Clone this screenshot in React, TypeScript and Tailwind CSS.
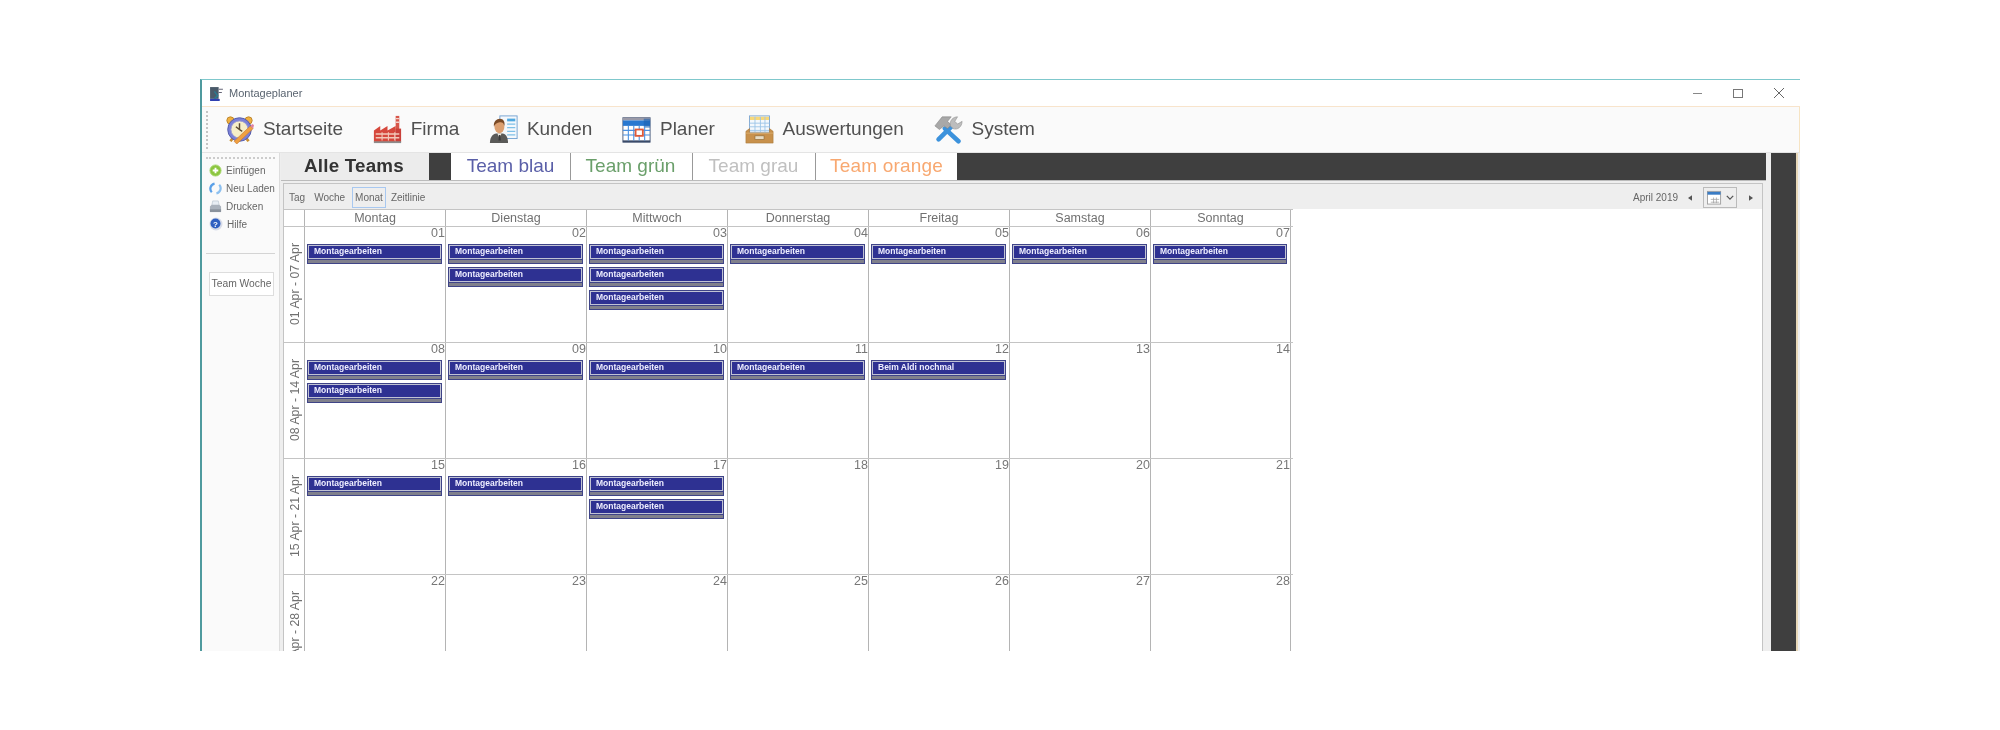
import React from "react";

const ClockIcon = () => (
  <svg viewBox="0 0 32 32" className="w-[29px] h-[29px] shrink-0">
    <circle cx="6" cy="6" r="4" fill="#f0b040" stroke="#b9822a" />
    <circle cx="26" cy="6" r="4" fill="#f0b040" stroke="#b9822a" />
    <path d="M6 29l3-4M26 29l-3-4" stroke="#c98f30" strokeWidth="3" />
    <circle cx="16" cy="16" r="13" fill="#7a80d8" stroke="#5058a8" />
    <circle cx="16" cy="16" r="9.5" fill="#f6eec8" stroke="#9a9ad0" />
    <path d="M16 9v7l-4-3M16 16l3 2" stroke="#5a4a30" strokeWidth="1.6" fill="none" />
    <path d="M10 29L28 12l3 3-18 17z" fill="#f0a040" stroke="#c87830" strokeWidth=".7" />
    <path d="M28 12l3 3 1-4-2-1z" fill="#e080a0" />
  </svg>
);

const FactoryIcon = () => (
  <svg viewBox="0 0 32 32" className="w-[29px] h-[29px] shrink-0">
    <rect x="25" y="1" width="4" height="18" fill="#d8564a" />
    <path d="M25 4h4M25 8h4" stroke="#f0d0c8" strokeWidth="1.4" />
    <path d="M1 30V17l7-5v5l8-5v5l9-5v18z" fill="#d6483c" />
    <rect x="25" y="15" width="6" height="15" fill="#c9403a" />
    <path d="M3 21h26M3 25h26" stroke="#f2c8b8" strokeWidth="1.6" />
    <path d="M10 19v9M17 19v9M24 19v9" stroke="#f2c8b8" strokeWidth="1.2" />
    <rect x="1" y="29" width="30" height="2" fill="#8c8c8c" />
  </svg>
);

const PersonIcon = () => (
  <svg viewBox="0 0 32 32" className="w-[29px] h-[29px] shrink-0">
    <rect x="12" y="1" width="19" height="25" fill="#f4f8fc" stroke="#6f9fd0" />
    <rect x="20" y="4" width="9" height="3" fill="#4fa8e0" />
    <path d="M20 10h9M20 14h9M20 18h9M20 22h9" stroke="#7fc0e8" strokeWidth="1.5" />
    <path d="M1 31c0-8 4-11 9-11h3c5 0 8 3 8 11z" fill="#5a5a58" />
    <path d="M9 20l2.500 5 2.500-5z" fill="#efeae0" />
    <path d="M11 22h1.500l.5 6h-2.500z" fill="#3a3a3a" />
    <ellipse cx="11.500" cy="13" rx="5.500" ry="7" fill="#dca071" />
    <path d="M5.500 13c-1-6 3-9 6.500-9s6 3 5 8c-1-3-2-4-4-4-3 0-6 1-7.500 5z" fill="#7a4a26" />
  </svg>
);

const CalendarIcon = () => (
  <svg viewBox="0 0 32 32" className="w-[29px] h-[29px] shrink-0">
    <rect x="1" y="3" width="30" height="27" fill="#fff" stroke="#4a5a78" />
    <rect x="1" y="3" width="30" height="3" fill="#9a9aa8" />
    <path d="M1 6h30v6H1z" fill="#2878d0" />
    <path d="M24 4h7v10h-7z" fill="#1c60b0" opacity=".6" />
    <path d="M1 28h30v2H1z" fill="#3a4a68" />
    <path d="M7 12v16M13 12v16M19 12v16M25 12v16M1 17h30M1 22h30" stroke="#4a90e0" strokeWidth="1.2" />
    <rect x="15" y="16" width="8" height="7" fill="#fff" stroke="#e05a38" strokeWidth="2" />
  </svg>
);

const TrayIcon = () => (
  <svg viewBox="0 0 32 32" className="w-[29px] h-[29px] shrink-0">
    <rect x="5" y="1" width="22" height="18" fill="#f4f8fc" stroke="#7aa4d0" />
    <rect x="5.500" y="2" width="21" height="3.500" fill="#f8d878" />
    <path d="M5 9h22M5 13h22M5 17h22M11 2v17M17 2v17M22 2v17" stroke="#9cc4e8" strokeWidth="1" />
    <path d="M1 18l4-3v5h22v-5l4 3v13H1z" fill="#c8914c" stroke="#a87638" strokeWidth=".6" />
    <path d="M1 20h30" stroke="#dcae70" />
    <rect x="11" y="23" width="10" height="4" fill="#e8dcc4" stroke="#8c6834" strokeWidth=".7" />
  </svg>
);

const ToolsIcon = () => (
  <svg viewBox="0 0 32 32" className="w-[29px] h-[29px] shrink-0">
    <path d="M12 15L27 29" stroke="#3c92dc" strokeWidth="5" strokeLinecap="round" />
    <path d="M5 27L20 12" stroke="#3c92dc" strokeWidth="5" strokeLinecap="round" />
    <path d="M1 12L9 2h10l-4 5 4 4-4 4-4-3-5 4z" fill="#a8a8a8" stroke="#808080" strokeWidth=".6" />
    <path d="M18 12c-1-6 3-10 8-10l-3 5 3 3 5-3c0 6-5 10-10 8z" fill="#bdbdbd" stroke="#8c8c8c" strokeWidth=".6" />
  </svg>
);

const ribbon: [React.ReactNode, string][] = [
  [<ClockIcon />, "Startseite"],
  [<FactoryIcon />, "Firma"],
  [<PersonIcon />, "Kunden"],
  [<CalendarIcon />, "Planer"],
  [<TrayIcon />, "Auswertungen"],
  [<ToolsIcon />, "System"],
];

const PlusIcon = () => (
  <svg viewBox="0 0 14 14" className="w-[13px] h-[13px] shrink-0">
    <circle cx="7" cy="7" r="6" fill="#8cc63f" stroke="#a8d870" />
    <path d="M7 4v6M4 7h6" stroke="#fff" strokeWidth="2" />
  </svg>
);
const ReloadIcon = () => (
  <svg viewBox="0 0 14 14" className="w-[13px] h-[13px] shrink-0">
    <path d="M3 11A5.500 5.500 0 0 1 6 1.800" fill="none" stroke="#5aa0e8" strokeWidth="2.400" />
    <path d="M11 3a5.500 5.500 0 0 1-3 9.200" fill="none" stroke="#8cc0f0" strokeWidth="2.400" />
  </svg>
);
const PrintIcon = () => (
  <svg viewBox="0 0 14 14" className="w-[13px] h-[13px] shrink-0">
    <path d="M4 1h6l1 5H3z" fill="#e8eef4" stroke="#b0bcc8" strokeWidth=".6" />
    <path d="M1 7l2-2h8l2 2v5H1z" fill="#aab2bc" />
    <path d="M1 10h12v3H1z" fill="#8a929c" />
  </svg>
);
const HelpIcon = () => (
  <svg viewBox="0 0 14 14" className="w-[14px] h-[14px] shrink-0">
    <circle cx="7" cy="7" r="6.500" fill="#d8dce8" />
    <circle cx="6.500" cy="6.500" r="5" fill="#2f5fc0" />
    <text x="6.500" y="9.500" textAnchor="middle" fontSize="8" fontWeight="700" fill="#fff" fontFamily="Liberation Sans">?</text>
  </svg>
);

const CalIcon = () => (
  <svg viewBox="0 0 16 16" className="w-[15px] h-[15px] shrink-0">
    <rect x=".5" y="1.500" width="14" height="13.500" fill="#fff" stroke="#a0a0a0" />
    <rect x=".5" y="2" width="14" height="3" fill="#3a7cc4" />
    <path d="M4 10h9M4 13h9M7 8v6M10 8v6" stroke="#a0a0a0" strokeWidth=".8" />
  </svg>
);

const days = ["Montag", "Dienstag", "Mittwoch", "Donnerstag", "Freitag", "Samstag", "Sonntag"];
const M = "Montagearbeiten";
const weeks: { label: string; days: { n: string; ev: string[] }[] }[] = [
  {
    label: "01 Apr - 07 Apr",
    days: [
      { n: "01", ev: [M] },
      { n: "02", ev: [M, M] },
      { n: "03", ev: [M, M, M] },
      { n: "04", ev: [M] },
      { n: "05", ev: [M] },
      { n: "06", ev: [M] },
      { n: "07", ev: [M] },
    ],
  },
  {
    label: "08 Apr - 14 Apr",
    days: [
      { n: "08", ev: [M, M] },
      { n: "09", ev: [M] },
      { n: "10", ev: [M] },
      { n: "11", ev: [M] },
      { n: "12", ev: ["Beim Aldi nochmal"] },
      { n: "13", ev: [] },
      { n: "14", ev: [] },
    ],
  },
  {
    label: "15 Apr - 21 Apr",
    days: [
      { n: "15", ev: [M] },
      { n: "16", ev: [M] },
      { n: "17", ev: [M, M] },
      { n: "18", ev: [] },
      { n: "19", ev: [] },
      { n: "20", ev: [] },
      { n: "21", ev: [] },
    ],
  },
  {
    label: "22 Apr - 28 Apr",
    days: ["22", "23", "24", "25", "26", "27", "28"].map((n) => ({ n, ev: [] })),
  },
];

const Event = ({ t }: { t: string }) => (
  <div className="h-[20px] bg-[#3f4488] p-[1px] mb-[3px]">
    <div className="h-[14px] bg-[#2e3192] border border-[#c0c2d4] pl-[5px] text-[8.5px] leading-[11px] font-bold text-[#eeeeff] overflow-hidden whitespace-nowrap">
      {t}
    </div>
    <div className="h-[3px] mt-[1px] bg-[#80808c]" />
  </div>
);

const Tab = ({ t, c, w, b }: { t: string; c: string; w: string; b: string }) => (
  <div className={`h-[27px] bg-white flex items-center justify-center text-[19px] shrink-0 ${c} ${w} ${b}`}>{t}</div>
);

export default function App() {
  return (
    <div className="h-[730px] w-[2000px] bg-white pt-[79px] pl-[200px] overflow-hidden font-['Liberation_Sans',sans-serif]">
      <div className="w-[1600px] h-[572px] flex flex-col border-t border-t-[#7fc8cc] border-l-2 border-l-[#4f9a9e] overflow-hidden bg-white blur-[0.5px]">
        {/* title bar */}
        <div className="h-[27px] shrink-0 flex items-center pl-[7px] pr-[16px] text-[#555] border-b border-b-[#f8e4cc]">
          <svg viewBox="0 0 14 14" className="w-[15px] h-[15px] shrink-0">
            <rect x="1" y="1" width="8" height="11" fill="#4a5a6a" />
            <path d="M9 3h4M9 6h3" stroke="#667" strokeWidth="1" />
            <path d="M5 5l3 4-3 3" stroke="#2a7a90" strokeWidth="1.400" fill="none" />
            <rect x="1" y="12" width="9" height="2" fill="#3040b0" />
          </svg>
          <span className="ml-[5px] text-[11px] text-[#5a6470]">Montageplaner</span>
          <div className="ml-auto flex items-center gap-[31px] text-[#777]">
            <span className="block w-[9px] h-px bg-[#888]" />
            <span className="block w-[10px] h-[9px] border border-[#777]" />
            <svg viewBox="0 0 10 10" className="w-[10px] h-[10px]">
              <path d="M0 0l10 10M10 0L0 10" stroke="#666" strokeWidth="1" />
            </svg>
          </div>
        </div>
        {/* ribbon */}
        <div className="h-[46px] shrink-0 bg-[#fafafa] pl-[4px] flex items-center border-r border-r-[#f6e4c4] border-b border-b-[#e4e4e4]">
          <div className="h-[38px] border-l-2 border-dotted border-l-[#c4c4c4]" />
          <div className="ml-[17px] flex items-center gap-[29.7px]">
            {ribbon.map(([icon, t]) => (
              <div key={t} className="flex items-center gap-[8.9px] text-[19px] text-[#505050]">
                {icon}
                <span>{t}</span>
              </div>
            ))}
          </div>
        </div>
        {/* body */}
        <div className="flex flex-1 min-h-0">
          {/* side panel */}
          <div className="w-[78px] shrink-0 bg-[#fafafa] px-[4px] pt-[4px] border-r border-r-[#dddddd] flex flex-col text-[10px] text-[#666] whitespace-nowrap">
            <div className="border-t-2 border-dotted border-t-[#cccccc] mb-[2px]" />
            <div className="h-[18px] flex items-center gap-[4px] pl-[3px]"><PlusIcon />Einfügen</div>
            <div className="h-[18px] flex items-center gap-[4px] pl-[3px]"><ReloadIcon />Neu Laden</div>
            <div className="h-[18px] flex items-center gap-[4px] pl-[3px]"><PrintIcon />Drucken</div>
            <div className="h-[18px] flex items-center gap-[4px] pl-[3px]"><HelpIcon />Hilfe</div>
            <div className="mt-[20px] border-t border-t-[#d4d4d4]" />
            <div className="mt-[18px] ml-[3px] w-[65px] h-[24px] border border-[#dddddd] bg-white flex items-center justify-center text-[10.300px]">Team Woche</div>
          </div>
          {/* main */}
          <div className="flex-1 min-w-0 flex bg-[#eeeeee]">
            <div className="w-[1486px] shrink-0 flex flex-col pl-[1px]">
              <div className="h-[28px] shrink-0 flex bg-[#3f3f3f] border-b border-b-[#bbbbbb]">
                <div className="w-[148px] shrink-0 bg-[#ececec] flex items-center justify-center font-bold text-[18.800px] text-[#333] tracking-[0.2px] pr-[2px]">Alle Teams</div>
                <div className="w-[22px] shrink-0" />
                <Tab t="Team blau" c="text-[#5a5fa8]" w="w-[119px]" b="" />
                <Tab t="Team grün" c="text-[#6a9f6a] pr-[2px]" w="w-[122px]" b="border-l border-l-[#999999]" />
                <Tab t="Team grau" c="text-[#c0c0c0] pr-[1px]" w="w-[123px]" b="border-l border-l-[#999999]" />
                <Tab t="Team orange" c="text-[#f8a870] tracking-[0.2px]" w="w-[142px]" b="border-l border-l-[#999999]" />
              </div>
              <div className="mt-[2px] ml-[2px] mr-[3px] flex-1 min-h-0 flex flex-col border border-b-0 border-[#c4c4c4] bg-white overflow-hidden">
                {/* toolbar */}
                <div className="h-[25px] shrink-0 bg-[#eeeeee] flex items-center pl-[5px] pr-[9px] pt-[2px] text-[10px] text-[#666]">
                  <span>Tag</span>
                  <span className="ml-[9px]">Woche</span>
                  <span className="ml-[7px] px-[2px] h-[21px] flex items-center border border-[#a8c8f0]">Monat</span>
                  <span className="ml-[5px]">Zeitlinie</span>
                  <span className="ml-auto">April 2019</span>
                  <svg viewBox="0 0 6 8" className="w-[4px] h-[6px] ml-[10px]"><path d="M6 0v8L0 4z" fill="#555" /></svg>
                  <div className="ml-[11px] w-[34px] h-[21px] border border-[#bbbbbb] flex items-center pl-[3px] gap-[4px]">
                    <CalIcon />
                    <svg viewBox="0 0 10 6" className="w-[8px] h-[5px]"><path d="M1 1l4 4 4-4" fill="none" stroke="#555" strokeWidth="1.600" /></svg>
                  </div>
                  <svg viewBox="0 0 6 8" className="w-[4px] h-[6px] ml-[12px]"><path d="M0 0v8l6-4z" fill="#555" /></svg>
                </div>
                {/* grid */}
                <div className="flex flex-col w-[1009px]">
                  <div className="flex h-[17px] shrink-0 border-t border-t-[#c4c4c4]">
                    <div className="w-[20px] shrink-0" />
                    {days.map((d) => (
                      <div key={d} className="w-[141px] shrink-0 border-l border-l-[#b4b4b4] last:border-r last:border-r-[#b4b4b4] flex items-center justify-center text-[12.500px] text-[#707070]">{d}</div>
                    ))}
                  </div>
                  {weeks.map((w) => (
                    <div key={w.label} className="flex h-[116px] shrink-0 border-t border-t-[#c4c4c4]">
                      <div className="w-[20px] shrink-0 flex items-center justify-center overflow-hidden pl-[2px]">
                        <span className="[writing-mode:vertical-rl] rotate-180 whitespace-nowrap text-[12.300px] text-[#707070]">{w.label}</span>
                      </div>
                      {w.days.map((d) => (
                        <div key={d.n} className="w-[141px] shrink-0 border-l border-l-[#b4b4b4] last:border-r last:border-r-[#b4b4b4] flex flex-col">
                          <div className="h-[17px] shrink-0 text-right text-[12.500px] leading-[12px] text-[#777]">{d.n}</div>
                          <div className="pl-[2px] pr-[3px]">
                            {d.ev.map((e, i) => (
                              <Event key={i} t={e} />
                            ))}
                          </div>
                        </div>
                      ))}
                    </div>
                  ))}
                </div>
              </div>
            </div>
            <div className="w-[27px] ml-[5px] shrink-0 bg-[#3f3f3f] border-r-2 border-r-[#e8d8b8]" />
          </div>
        </div>
      </div>
    </div>
  );
}
